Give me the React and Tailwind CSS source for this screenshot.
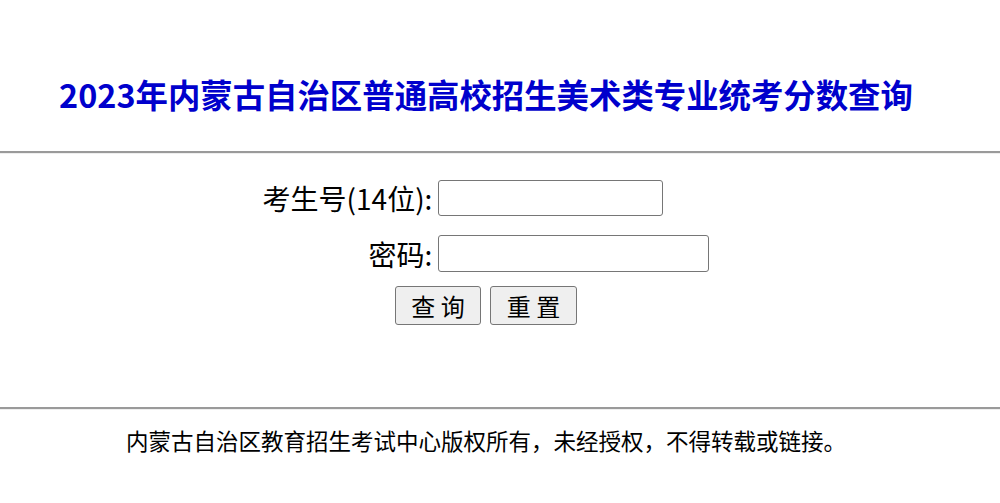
import React, { useState } from "react";

const cjk = { fontFamily: '"Noto Sans CJK SC", "Noto Sans", sans-serif' };

export default function App() {
  const [ksh, setKsh] = useState("");
  const [pwd, setPwd] = useState("");

  const reset = () => {
    setKsh("");
    setPwd("");
  };

  return (
    <div className="w-[1000px] h-[503px] bg-white text-black overflow-hidden" style={cjk}>
      {/* Title */}
      <div className="h-[151px] flex items-center justify-center pr-[28px] pt-[38px]">
        <h1 className="text-[32.4px] leading-none font-bold text-[#0000cc]">
          2023年内蒙古自治区普通高校招生美术类专业统考分数查询
        </h1>
      </div>
      <div className="h-[2px] bg-[#9a9a9a] border-b border-[#eeeeee] box-content" />

      {/* Form */}
      <form
        className="h-[253px] pt-[26px] flex justify-center pr-[28px]"
        onSubmit={(e) => e.preventDefault()}
      >
        <table className="border-separate border-spacing-0 h-fit">
          <tbody>
            <tr>
              <td className="text-right text-[28px] leading-none pr-[6px] h-[36px] align-middle">
                考生号(14位):
              </td>
              <td className="align-middle">
                <input
                  type="text"
                  value={ksh}
                  onChange={(e) => setKsh(e.target.value)}
                  className="block w-[225px] h-[36px] border border-[#767676] rounded-[3px] px-1 text-xl outline-none"
                />
              </td>
            </tr>
            <tr>
              <td className="text-right text-[28px] leading-none pr-[6px] pt-[19px] align-middle">
                密码:
              </td>
              <td className="pt-[19px] align-middle">
                <input
                  type="password"
                  value={pwd}
                  onChange={(e) => setPwd(e.target.value)}
                  className="block w-[271px] h-[37px] border border-[#767676] rounded-[3px] px-1 text-xl outline-none"
                />
              </td>
            </tr>
            <tr>
              <td colSpan={2} className="pt-[14px]">
                <div className="flex justify-center gap-[9px]">
                  <button
                    type="submit"
                    className="w-[86px] h-[39px] bg-[#efefef] border border-[#767676] rounded-[3px] text-[24px] leading-none"
                  >
                    查 询
                  </button>
                  <button
                    type="button"
                    onClick={reset}
                    className="w-[87px] h-[39px] bg-[#efefef] border border-[#767676] rounded-[3px] text-[24px] leading-none"
                  >
                    重 置
                  </button>
                </div>
              </td>
            </tr>
          </tbody>
        </table>
      </form>
      <div className="h-[2px] bg-[#9a9a9a] border-b border-[#eeeeee] box-content" />

      {/* Footer */}
      <div className="pt-[19px] flex justify-center pr-[28px]">
        <p className="text-[22.5px] leading-none">
          内蒙古自治区教育招生考试中心版权所有，未经授权，不得转载或链接。
        </p>
      </div>
    </div>
  );
}
